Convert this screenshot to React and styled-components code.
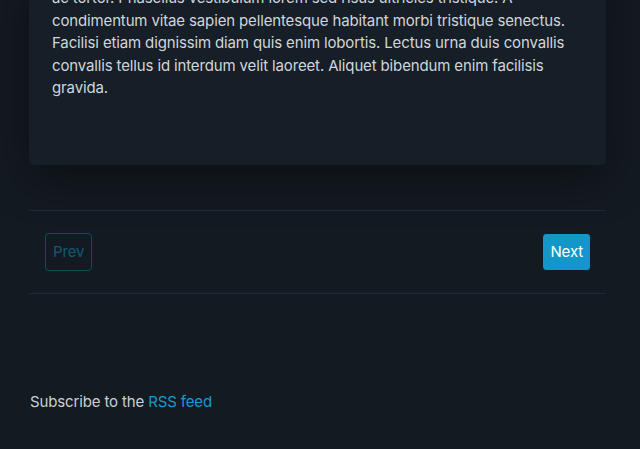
import React from "react";
import styled, { createGlobalStyle } from "styled-components";

const Global = createGlobalStyle`
  html, body {
    margin: 0;
    padding: 0;
    background: #141a21;
    overflow: hidden;
  }
  body {
    font-family: Inter, "Noto Sans", sans-serif;
    font-size: 15px;
    letter-spacing: -0.14px;
    color: #d0d6dc;
  }
`;

const Page = styled.div`
  width: 577px;
  margin-left: 29px;
`;

const Card = styled.article`
  margin-top: -33px;
  padding: 20px 22px 65px 23px;
  background: #161e27;
  border-radius: 0 0 5px 5px;
  box-shadow: 0 14px 44px rgba(0, 0, 0, 0.38);
  line-height: 22.5px;
  p {
    margin: 0;
  }
`;

const Pager = styled.nav`
  margin-top: 45px;
  border-top: 1px solid #1e2833;
  border-bottom: 1px solid #1e2833;
  padding: 22px 15px 22px 16px;
  display: flex;
  justify-content: space-between;
  align-items: center;
`;

const PageButton = styled.a`
  box-sizing: border-box;
  height: 38px;
  padding: 0 7px;
  display: inline-flex;
  align-items: center;
  border-radius: 4px;
  font-size: 15px;
  text-decoration: none;
  border: 1px solid ${({ $primary }) => ($primary ? "#0e1a22" : "#0f4a60")};
  background: ${({ $primary }) => ($primary ? "#1396c8" : "transparent")};
  color: ${({ $primary }) => ($primary ? "#ffffff" : "#105a74")};
`;

const Footer = styled.footer`
  margin-top: 98px;
  padding-left: 1px;
  font-size: 15px;
  color: #c9d0d7;
  a {
    color: #1a9ad0;
    text-decoration: none;
  }
`;

export default function App() {
  return (
    <>
      <Global />
      <Page>
        <Card>
          <p>
            ac tortor. Phasellus vestibulum lorem sed risus ultricies tristique. A
            condimentum vitae sapien pellentesque habitant morbi tristique senectus.
            Facilisi etiam dignissim diam quis enim lobortis. Lectus urna duis convallis
            convallis tellus id interdum velit laoreet. Aliquet bibendum enim facilisis
            gravida.
          </p>
        </Card>
        <Pager>
          <PageButton href="#">Prev</PageButton>
          <PageButton href="#" $primary>
            Next
          </PageButton>
        </Pager>
        <Footer>
          Subscribe to the <a href="#">RSS feed</a>
        </Footer>
      </Page>
    </>
  );
}
